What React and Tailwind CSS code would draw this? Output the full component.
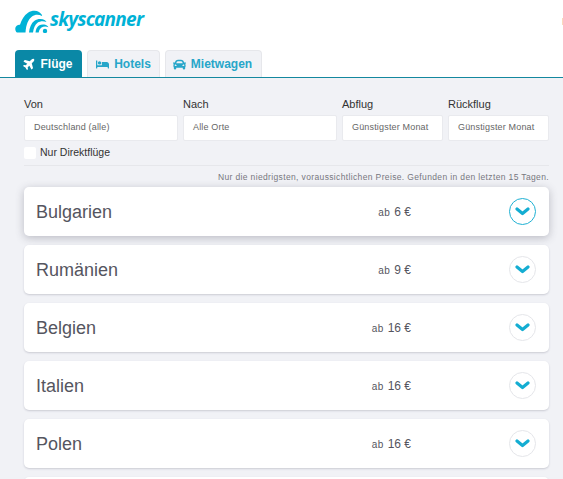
import React from "react";
import { FaPlane, FaBed, FaCar } from "react-icons/fa";

const Logo = () => (
  <div className="flex items-end h-[25px] text-[#00b2d6]">
    <svg width="34" height="23" viewBox="0 0 34 23" fill="currentColor">
      <path d="M2 22.500C-.2 21.500-.4 17 2 15.400c1-.7 2.200-.9 3-.6C6.500 10 9 5.500 13 2.800 16.500.5 21 .2 24 2c2 1.200 3.500 3.300 3 4-3-1.500-7-1.700-10 .5-3.700 2.700-6 8-6.500 16z" />
      <path d="M14 22.500c.4-5 2.300-9.500 5.500-11.800 3-2 7.500-2.200 10.500-.4l1.500 1.700c-3-1.200-6.500-1-9 .8-2.500 1.800-4 5.500-4.500 9.700z" />
      <path d="M20.500 22.500c.3-3 1.500-5.700 3.500-7 2.400-1.500 6-1.500 8.500.4l1 1.300c-2.500-.9-5.200-.8-7 .4-1.500 1-2.500 2.800-2.800 4.900z" />
      <circle cx="30" cy="21" r="2.200" />
    </svg>
    <span className="ml-[1px] text-[19px] leading-[25px] italic font-bold tracking-[-0.75px] font-['Open_Sans',sans-serif] relative top-[-1px]">
      skyscanner
    </span>
  </div>
);

const tabBase =
  "flex items-center justify-center h-[27px] rounded-t-[4px] text-[12px] font-bold font-['Liberation_Sans',sans-serif]";

const Field = ({ label, value, width }) => (
  <div className={`flex flex-col ${width}`}>
    <label className="text-[11px] leading-[13px] text-[#333333] h-[17px]">{label}</label>
    <div className="h-[26px] bg-white border border-[#e9eaee] rounded-[2px] flex items-center pl-[9px] text-[9px] text-[#666666] tracking-[0.17px] whitespace-nowrap">
      {value}
    </div>
  </div>
);

const Chevron = ({ active }) => (
  <div
    className={`w-[27px] h-[27px] rounded-full bg-white flex items-center justify-center ${
      active ? "border-[1.5px] border-[#1fb1d3]" : "border border-[#e5e6ea]"
    }`}
  >
    <svg width="15" height="9" viewBox="0 0 15 9" fill="none">
      <path d="M2 2l5.500 4.500L13 2" stroke="#14add2" strokeWidth="3.200" strokeLinecap="round" strokeLinejoin="round" />
    </svg>
  </div>
);

const Card = ({ name, price, active }) => (
  <div
    className={`relative h-[49px] shrink-0 bg-white rounded-[5px] flex items-center pl-[12px] pr-[13px] ${
      active ? "shadow-[0_2px_8px_rgba(70,70,90,0.32)]" : "shadow-[0_1px_2px_rgba(70,70,90,0.22)]"
    }`}
  >
    <span className="text-[18px] text-[#555560] leading-none">{name}</span>
    {price && (
      <span className="absolute right-[138px] flex items-baseline gap-[4px] text-[#555560]">
        <span className="text-[10px] tracking-[0.4px]">ab</span>
        <span className="text-[12px]">{price} €</span>
      </span>
    )}
    {name && (
      <span className="ml-auto">
        <Chevron active={active} />
      </span>
    )}
  </div>
);

export default function App() {
  return (
    <div className="w-[563px] h-[479px] overflow-hidden bg-[#f1f2f6] font-['Liberation_Sans',sans-serif]">
      <header className="relative h-[78px] bg-white border-b border-[#14889f] pl-[15px] pt-[8px]">
        <Logo />
        <span className="absolute right-0 top-[18px] w-[1px] h-[7px] bg-[#fbd9bd]" />
        <nav className="flex gap-[5px] mt-[17px]">
          <div className={`${tabBase} w-[67px] pr-[2px] bg-[#0a88a6] text-white gap-[5px]`}>
            <FaPlane className="text-[13px] -rotate-45" />
            Flüge
          </div>
          <div className={`${tabBase} w-[73px] bg-[#f1f2f6] border border-b-0 border-[#e6e7eb] text-[#27a6c9] gap-[5px]`}>
            <FaBed className="text-[13px]" />
            Hotels
          </div>
          <div className={`${tabBase} w-[97px] pr-[2px] bg-[#f1f2f6] border border-b-0 border-[#e6e7eb] text-[#27a6c9] gap-[5px]`}>
            <FaCar className="text-[13px]" />
            Mietwagen
          </div>
        </nav>
      </header>

      <main className="pl-[24px] pr-[14px] pt-[20px]">
        <div className="flex">
          <Field label="Von" value="Deutschland (alle)" width="w-[154px] mr-[5px]" />
          <Field label="Nach" value="Alle Orte" width="w-[154px] mr-[5px]" />
          <Field label="Abflug" value="Günstigster Monat" width="w-[101px] mr-[5px]" />
          <Field label="Rückflug" value="Günstigster Monat" width="w-[101px]" />
        </div>

        <div className="flex items-center mt-[6px] h-[12px]">
          <span className="w-[12px] h-[12px] bg-white rounded-[2px] mr-[4px]" />
          <span className="text-[10.500px] text-[#333333]">Nur Direktflüge</span>
        </div>

        <div className="mt-[6px] border-t border-[#e6e7eb] pt-[6px] text-right text-[8.500px] leading-[11px] tracking-[0.36px] text-[#777780]">
          Nur die niedrigsten, voraussichtlichen Preise. Gefunden in den letzten 15 Tagen.
        </div>

        <div className="flex flex-col gap-[9px] mt-[4px]">
          <Card name="Bulgarien" price="6" active />
          <Card name="Rumänien" price="9" />
          <Card name="Belgien" price="16" />
          <Card name="Italien" price="16" />
          <Card name="Polen" price="16" />
          <Card name="" price="" />
        </div>
      </main>
    </div>
  );
}
